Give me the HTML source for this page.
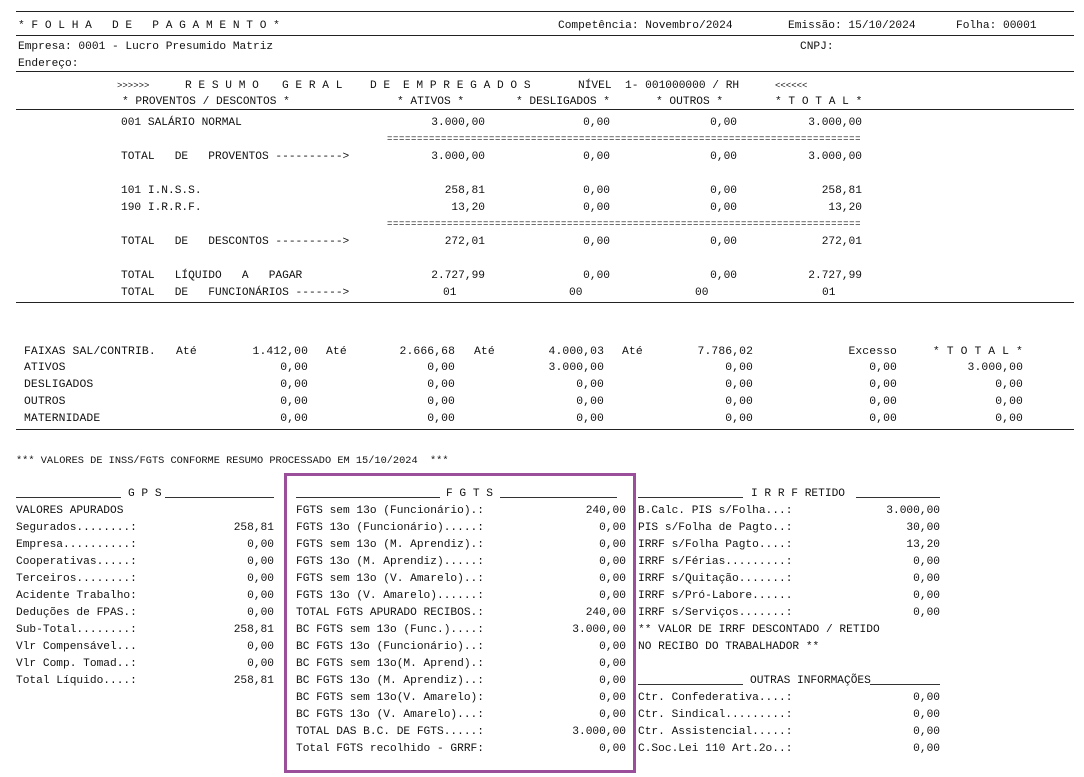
<!DOCTYPE html>
<html><head><meta charset="utf-8"><style>
body{margin:0;width:1084px;height:777px;background:#fff;position:relative;overflow:hidden;font-family:"Liberation Mono","Courier New",monospace;font-size:11.2px;color:#111}
.t{position:absolute;white-space:pre;line-height:14px;margin-top:2px}
.r{position:absolute;white-space:pre;line-height:14px;width:140px;text-align:right;margin-top:2px}
.h{position:absolute;height:0;border-top:1px solid #222}
.u{position:absolute;height:0;border-top:1px solid #333}
.s{font-size:9px}
.c{font-size:11.4px;letter-spacing:0.1px}
.e{font-size:9px;letter-spacing:0.6px}
</style></head><body>
<div class="h" style="left:16px;width:1058px;top:11px"></div>
<div class="h" style="left:16px;width:1058px;top:35px"></div>
<div class="h" style="left:16px;width:1058px;top:71px"></div>
<div class="h" style="left:16px;width:1058px;top:109px"></div>
<div class="h" style="left:16px;width:1058px;top:302px"></div>
<div class="h" style="left:16px;width:1058px;top:429px"></div>

<div class="t" style="left:18px;top:17px">* F O L H A   D E   P A G A M E N T O *</div>
<div class="t" style="left:558px;top:17px">Competência: Novembro/2024</div>
<div class="t" style="left:788px;top:17px">Emissão: 15/10/2024</div>
<div class="t" style="left:956px;top:17px">Folha: 00001</div>
<div class="t" style="left:18px;top:38px">Empresa: 0001 - Lucro Presumido Matriz</div>
<div class="t" style="left:800px;top:38px">CNPJ:</div>
<div class="t" style="left:18px;top:55px">Endereço:</div>

<div class="t s" style="left:117px;top:77px">&gt;&gt;&gt;&gt;&gt;&gt;</div>
<div class="t" style="left:185px;top:77px">R E S U M O</div>
<div class="t" style="left:282px;top:77px">G E R A L</div>
<div class="t" style="left:370px;top:77px">D E</div>
<div class="t" style="left:403px;top:77px">E M P R E G A D O S</div>
<div class="t" style="left:578px;top:77px">NÍVEL  1- 001000000 / RH</div>
<div class="t s" style="left:775px;top:77px">&lt;&lt;&lt;&lt;&lt;&lt;</div>
<div class="t" style="left:122px;top:93px">* PROVENTOS / DESCONTOS *</div>
<div class="t" style="left:397px;top:93px">* ATIVOS *</div>
<div class="t" style="left:516px;top:93px">* DESLIGADOS *</div>
<div class="t" style="left:656px;top:93px">* OUTROS *</div>
<div class="t" style="left:775px;top:93px">* T O T A L *</div>

<div class="t" style="left:121px;top:114px">001 SALÁRIO NORMAL</div>
<div class="r" style="left:345px;top:114px">3.000,00</div><div class="r" style="left:470px;top:114px">0,00</div><div class="r" style="left:597px;top:114px">0,00</div><div class="r" style="left:722px;top:114px">3.000,00</div>
<div class="t e" style="left:387px;top:130px">===============================================================================</div>
<div class="t" style="left:121px;top:148px">TOTAL   DE   PROVENTOS ----------&gt;</div>
<div class="r" style="left:345px;top:148px">3.000,00</div><div class="r" style="left:470px;top:148px">0,00</div><div class="r" style="left:597px;top:148px">0,00</div><div class="r" style="left:722px;top:148px">3.000,00</div>
<div class="t" style="left:121px;top:182px">101 I.N.S.S.</div>
<div class="r" style="left:345px;top:182px">258,81</div><div class="r" style="left:470px;top:182px">0,00</div><div class="r" style="left:597px;top:182px">0,00</div><div class="r" style="left:722px;top:182px">258,81</div>
<div class="t" style="left:121px;top:199px">190 I.R.R.F.</div>
<div class="r" style="left:345px;top:199px">13,20</div><div class="r" style="left:470px;top:199px">0,00</div><div class="r" style="left:597px;top:199px">0,00</div><div class="r" style="left:722px;top:199px">13,20</div>
<div class="t e" style="left:387px;top:215px">===============================================================================</div>
<div class="t" style="left:121px;top:233px">TOTAL   DE   DESCONTOS ----------&gt;</div>
<div class="r" style="left:345px;top:233px">272,01</div><div class="r" style="left:470px;top:233px">0,00</div><div class="r" style="left:597px;top:233px">0,00</div><div class="r" style="left:722px;top:233px">272,01</div>
<div class="t" style="left:121px;top:267px">TOTAL   LÍQUIDO   A   PAGAR</div>
<div class="r" style="left:345px;top:267px">2.727,99</div><div class="r" style="left:470px;top:267px">0,00</div><div class="r" style="left:597px;top:267px">0,00</div><div class="r" style="left:722px;top:267px">2.727,99</div>
<div class="t" style="left:121px;top:284px">TOTAL   DE   FUNCIONÁRIOS -------&gt;</div>
<div class="t" style="left:443px;top:284px">01</div><div class="t" style="left:569px;top:284px">00</div><div class="t" style="left:695px;top:284px">00</div><div class="t" style="left:822px;top:284px">01</div>

<div class="t c" style="left:24px;top:343px">FAIXAS SAL/CONTRIB.</div>
<div class="t c" style="left:176px;top:343px">Até</div><div class="t c" style="left:326px;top:343px">Até</div><div class="t c" style="left:474px;top:343px">Até</div><div class="t c" style="left:622px;top:343px">Até</div>
<div class="r c" style="left:168px;top:343px">1.412,00</div><div class="r c" style="left:315px;top:343px">2.666,68</div><div class="r c" style="left:464px;top:343px">4.000,03</div><div class="r c" style="left:613px;top:343px">7.786,02</div><div class="r c" style="left:757px;top:343px">Excesso</div><div class="r c" style="left:883px;top:343px">* T O T A L *</div>
<div class="t c" style="left:24px;top:359px">ATIVOS</div>
<div class="r c" style="left:168px;top:359px">0,00</div><div class="r c" style="left:315px;top:359px">0,00</div><div class="r c" style="left:464px;top:359px">3.000,00</div><div class="r c" style="left:613px;top:359px">0,00</div><div class="r c" style="left:757px;top:359px">0,00</div><div class="r c" style="left:883px;top:359px">3.000,00</div>
<div class="t c" style="left:24px;top:376px">DESLIGADOS</div>
<div class="r c" style="left:168px;top:376px">0,00</div><div class="r c" style="left:315px;top:376px">0,00</div><div class="r c" style="left:464px;top:376px">0,00</div><div class="r c" style="left:613px;top:376px">0,00</div><div class="r c" style="left:757px;top:376px">0,00</div><div class="r c" style="left:883px;top:376px">0,00</div>
<div class="t c" style="left:24px;top:393px">OUTROS</div>
<div class="r c" style="left:168px;top:393px">0,00</div><div class="r c" style="left:315px;top:393px">0,00</div><div class="r c" style="left:464px;top:393px">0,00</div><div class="r c" style="left:613px;top:393px">0,00</div><div class="r c" style="left:757px;top:393px">0,00</div><div class="r c" style="left:883px;top:393px">0,00</div>
<div class="t c" style="left:24px;top:410px">MATERNIDADE</div>
<div class="r c" style="left:168px;top:410px">0,00</div><div class="r c" style="left:315px;top:410px">0,00</div><div class="r c" style="left:464px;top:410px">0,00</div><div class="r c" style="left:613px;top:410px">0,00</div><div class="r c" style="left:757px;top:410px">0,00</div><div class="r c" style="left:883px;top:410px">0,00</div>

<div class="t" style="left:16px;top:452px;font-size:10.3px">*** VALORES DE INSS/FGTS CONFORME RESUMO PROCESSADO EM 15/10/2024  ***</div>

<div style="position:absolute;left:284px;top:473px;width:346px;height:294px;border:3px solid #9b4f9b"></div>

<!-- GPS -->
<div class="u" style="left:16px;width:105px;top:497px"></div>
<div class="t" style="left:128px;top:485px">G P S</div>
<div class="u" style="left:165px;width:109px;top:497px"></div>
<div class="t" style="left:16px;top:502px">VALORES APURADOS</div>
<div class="t" style="left:16px;top:519px">Segurados........:</div><div class="r" style="left:134px;top:519px">258,81</div>
<div class="t" style="left:16px;top:536px">Empresa..........:</div><div class="r" style="left:134px;top:536px">0,00</div>
<div class="t" style="left:16px;top:553px">Cooperativas.....:</div><div class="r" style="left:134px;top:553px">0,00</div>
<div class="t" style="left:16px;top:570px">Terceiros........:</div><div class="r" style="left:134px;top:570px">0,00</div>
<div class="t" style="left:16px;top:587px">Acidente Trabalho:</div><div class="r" style="left:134px;top:587px">0,00</div>
<div class="t" style="left:16px;top:604px">Deduções de FPAS.:</div><div class="r" style="left:134px;top:604px">0,00</div>
<div class="t" style="left:16px;top:621px">Sub-Total........:</div><div class="r" style="left:134px;top:621px">258,81</div>
<div class="t" style="left:16px;top:638px">Vlr Compensável...</div><div class="r" style="left:134px;top:638px">0,00</div>
<div class="t" style="left:16px;top:655px">Vlr Comp. Tomad..:</div><div class="r" style="left:134px;top:655px">0,00</div>
<div class="t" style="left:16px;top:672px">Total Líquido....:</div><div class="r" style="left:134px;top:672px">258,81</div>

<!-- FGTS -->
<div class="u" style="left:296px;width:144px;top:497px"></div>
<div class="t" style="left:446px;top:485px">F G T S</div>
<div class="u" style="left:500px;width:117px;top:497px"></div>
<div class="t" style="left:296px;top:502px">FGTS sem 13o (Funcionário).:</div><div class="r" style="left:486px;top:502px">240,00</div>
<div class="t" style="left:296px;top:519px">FGTS 13o (Funcionário).....:</div><div class="r" style="left:486px;top:519px">0,00</div>
<div class="t" style="left:296px;top:536px">FGTS sem 13o (M. Aprendiz).:</div><div class="r" style="left:486px;top:536px">0,00</div>
<div class="t" style="left:296px;top:553px">FGTS 13o (M. Aprendiz).....:</div><div class="r" style="left:486px;top:553px">0,00</div>
<div class="t" style="left:296px;top:570px">FGTS sem 13o (V. Amarelo)..:</div><div class="r" style="left:486px;top:570px">0,00</div>
<div class="t" style="left:296px;top:587px">FGTS 13o (V. Amarelo)......:</div><div class="r" style="left:486px;top:587px">0,00</div>
<div class="t" style="left:296px;top:604px">TOTAL FGTS APURADO RECIBOS.:</div><div class="r" style="left:486px;top:604px">240,00</div>
<div class="t" style="left:296px;top:621px">BC FGTS sem 13o (Func.)....:</div><div class="r" style="left:486px;top:621px">3.000,00</div>
<div class="t" style="left:296px;top:638px">BC FGTS 13o (Funcionário)..:</div><div class="r" style="left:486px;top:638px">0,00</div>
<div class="t" style="left:296px;top:655px">BC FGTS sem 13o(M. Aprend).:</div><div class="r" style="left:486px;top:655px">0,00</div>
<div class="t" style="left:296px;top:672px">BC FGTS 13o (M. Aprendiz)..:</div><div class="r" style="left:486px;top:672px">0,00</div>
<div class="t" style="left:296px;top:689px">BC FGTS sem 13o(V. Amarelo):</div><div class="r" style="left:486px;top:689px">0,00</div>
<div class="t" style="left:296px;top:706px">BC FGTS 13o (V. Amarelo)...:</div><div class="r" style="left:486px;top:706px">0,00</div>
<div class="t" style="left:296px;top:723px">TOTAL DAS B.C. DE FGTS.....:</div><div class="r" style="left:486px;top:723px">3.000,00</div>
<div class="t" style="left:296px;top:740px">Total FGTS recolhido - GRRF:</div><div class="r" style="left:486px;top:740px">0,00</div>

<!-- IRRF -->
<div class="u" style="left:638px;width:105px;top:497px"></div>
<div class="t" style="left:751px;top:485px">I R R F RETIDO</div>
<div class="u" style="left:856px;width:84px;top:497px"></div>
<div class="t" style="left:638px;top:502px">B.Calc. PIS s/Folha...:</div><div class="r" style="left:800px;top:502px">3.000,00</div>
<div class="t" style="left:638px;top:519px">PIS s/Folha de Pagto..:</div><div class="r" style="left:800px;top:519px">30,00</div>
<div class="t" style="left:638px;top:536px">IRRF s/Folha Pagto....:</div><div class="r" style="left:800px;top:536px">13,20</div>
<div class="t" style="left:638px;top:553px">IRRF s/Férias.........:</div><div class="r" style="left:800px;top:553px">0,00</div>
<div class="t" style="left:638px;top:570px">IRRF s/Quitação.......:</div><div class="r" style="left:800px;top:570px">0,00</div>
<div class="t" style="left:638px;top:587px">IRRF s/Pró-Labore......</div><div class="r" style="left:800px;top:587px">0,00</div>
<div class="t" style="left:638px;top:604px">IRRF s/Serviços.......:</div><div class="r" style="left:800px;top:604px">0,00</div>
<div class="t" style="left:638px;top:621px">** VALOR DE IRRF DESCONTADO / RETIDO</div>
<div class="t" style="left:638px;top:638px">NO RECIBO DO TRABALHADOR **</div>
<div class="u" style="left:638px;width:105px;top:684px"></div>
<div class="t" style="left:750px;top:672px">OUTRAS INFORMAÇÕES</div>
<div class="u" style="left:870px;width:70px;top:684px"></div>
<div class="t" style="left:638px;top:689px">Ctr. Confederativa....:</div><div class="r" style="left:800px;top:689px">0,00</div>
<div class="t" style="left:638px;top:706px">Ctr. Sindical.........:</div><div class="r" style="left:800px;top:706px">0,00</div>
<div class="t" style="left:638px;top:723px">Ctr. Assistencial.....:</div><div class="r" style="left:800px;top:723px">0,00</div>
<div class="t" style="left:638px;top:740px">C.Soc.Lei 110 Art.2o..:</div><div class="r" style="left:800px;top:740px">0,00</div>
</body></html>
